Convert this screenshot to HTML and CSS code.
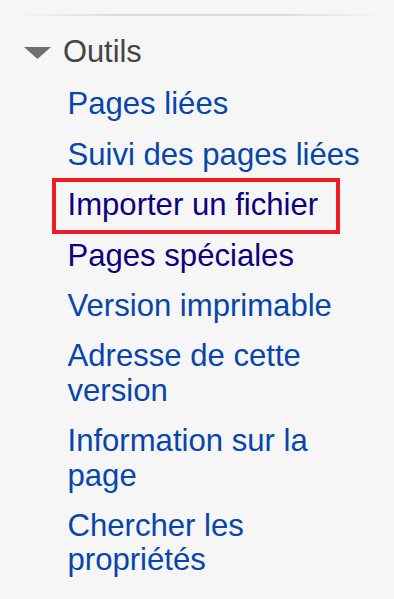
FILE: index.html
```html
<!DOCTYPE html>
<html lang="fr">
<head>
<meta charset="utf-8">
<title>Outils</title>
<link rel="stylesheet" href="styles.css">
</head>
<body>
<div class="panel">
  <div class="sep"></div>
  <nav class="portal">
    <h3 class="portal-heading">
      <svg class="caret" width="27" height="12" viewBox="0 0 27 12" aria-hidden="true"><polygon points="0,0 27,0 13.5,12" fill="#6f6f6f"/></svg>
      <span>Outils</span>
    </h3>
    <ul class="links">
      <li><a href="#">Pages liées</a></li>
      <li><a href="#">Suivi des pages liées</a></li>
      <li class="marked"><a href="#" class="visited">Importer un fichier</a></li>
      <li><a href="#" class="visited">Pages spéciales</a></li>
      <li><a href="#">Version imprimable</a></li>
      <li><a href="#">Adresse de cette version</a></li>
      <li><a href="#">Information sur la page</a></li>
      <li><a href="#">Chercher les propriétés</a></li>
    </ul>
  </nav>
</div>
</body>
</html>
```

FILE: styles.css
```css
html, body {
  margin: 0;
  padding: 0;
  background: #f6f6f6;
}
body {
  font-family: "Liberation Sans", Arial, sans-serif;
  width: 394px;
  height: 599px;
  overflow: hidden;
}
.panel {
  padding-top: 14px;
}
.sep {
  height: 2px;
  margin: 0 12px 0 14px;
  background: linear-gradient(to right, rgba(215,215,215,0) 0%, #d9d9d9 30%, #d9d9d9 70%, rgba(215,215,215,0) 100%);
}
.portal-heading {
  display: flex;
  align-items: center;
  gap: 12px;
  margin: 19px 0 0 0;
  padding-left: 24px;
  font-size: 30.8px;
  font-weight: normal;
  line-height: 34.4px;
  color: #454545;
}
.caret {
  flex: none;
  margin-top: 2px;
}
.links {
  list-style: none;
  margin: 10px 0 0 0;
  padding: 0 0 0 67.5px;
  width: 310px;
}
.links li {
  padding: 8px 0;
  font-size: 31.1px;
  line-height: 34.4px;
}
.links a {
  color: #0645ad;
  text-decoration: none;
}
.links a.visited {
  color: #0b0080;
}
.marked {
  position: relative;
}
.marked::after {
  content: "";
  position: absolute;
  left: -15.5px;
  top: -2px;
  width: 288px;
  height: 56px;
  border: 4.5px solid #ed1c24;
  box-sizing: border-box;
  pointer-events: none;
}
```
